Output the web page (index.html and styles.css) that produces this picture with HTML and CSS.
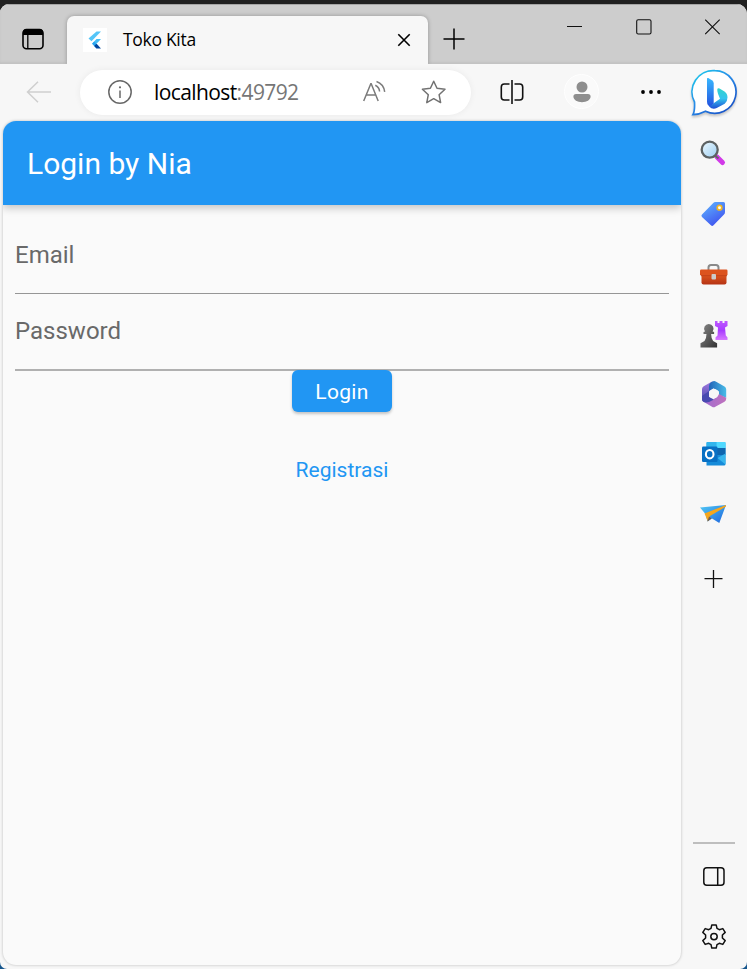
FILE: index.html
```html
<!DOCTYPE html>
<html lang="id">
<head>
<meta charset="utf-8">
<title>Toko Kita</title>
<link rel="stylesheet" href="styles.css">
</head>
<body>
<div class="window">
  <header class="tabstrip">
    <svg class="tab-actions" width="24" height="24" viewBox="0 0 24 24"><rect x="2" y="2.500" width="20" height="19.300" rx="3.500" fill="none" stroke="#000" stroke-width="1.600"/><path d="M2 8V5.500A3.500 3.500 0 0 1 5.500 2h13A3.500 3.500 0 0 1 22 5.500V8z"/><path d="M6.800 7v15" stroke="#000" stroke-width="1.300"/></svg>
    <div class="tab">
      <span class="favicon"><svg width="24" height="24" viewBox="0 0 24 24"><path d="M13.500 3.500H18L8.500 13.300 5.500 10.500z" fill="#54c5f8"/><path d="M13.500 11H18l-4.500 4.800H9z" fill="#45bdf5"/><path d="M9 15.800l2.200-2.300 4.300 4.500-2 2.500z" fill="#29a5ef"/><path d="M11.200 18l2.300-2.200 4.500 4.700h-4.500z" fill="#01459e"/></svg></span>
      <span class="tab-title">Toko Kita</span>
      <svg class="tab-close" width="16" height="16" viewBox="0 0 16 16"><path d="M2.300 2.300l11.400 11.400M13.700 2.300L2.300 13.700" stroke="#000" stroke-width="1.600"/></svg>
    </div>
    <svg class="new-tab" width="24" height="24" viewBox="0 0 24 24"><path d="M1.500 12h21M12 1.500v21" stroke="#000" stroke-width="1.500"/></svg>
    <div class="window-controls">
      <svg width="16" height="16" viewBox="0 0 16 16"><path d="M0 7.500h15" stroke="#111" stroke-width="1"/></svg>
      <svg width="16" height="16" viewBox="0 0 16 16"><rect x=".7" y=".7" width="14.300" height="14.300" rx="1.500" fill="none" stroke="#111" stroke-width="1.100"/></svg>
      <svg width="16" height="16" viewBox="0 0 16 16"><path d="M.2.700l14.500 14.500M14.700.700L.2 15.200" stroke="#111" stroke-width="1.100"/></svg>
    </div>
  </header>

  <nav class="toolbar">
    <svg class="back" width="26" height="24" viewBox="0 0 26 24"><path d="M25 12H1.500M12 1.800L1.500 12 12 22.200" fill="none" stroke="#cfcfcf" stroke-width="1.500"/></svg>
    <div class="address">
      <svg class="info" width="26" height="26" viewBox="0 0 26 26"><circle cx="13" cy="13" r="11.200" fill="none" stroke="#686868" stroke-width="1.500"/><path d="M13 11.500v7.500" stroke="#686868" stroke-width="1.500"/><circle cx="13" cy="8.300" r="1.100" fill="#686868"/></svg>
      <span class="url"><span class="host">localhost</span><span class="port">:49792</span></span>
      <svg class="read" width="26" height="26" viewBox="0 0 26 26" fill="none" stroke="#7b7b7b" stroke-width="1.500"><path d="M1.700 22L8.800 4.800h.4l7 17.200M4.400 16h9.300M13.300 6.300c2.700 1.300 4 3 4.300 6.200M14.500 2.500c4.400 1.500 7.400 4.700 8.200 10.300"/></svg>
      <svg class="star" width="26" height="26" viewBox="0 0 26 26"><path d="M12.700 2.300l3.300 7 8 .9-5.900 5.500 1.500 7.900-6.900-3.900-6.900 3.900 1.500-7.900-5.900-5.500 8-.9z" fill="none" stroke="#727272" stroke-width="1.500" stroke-linejoin="round"/></svg>
    </div>
    <svg class="split" width="26" height="26" viewBox="0 0 26 26" fill="none" stroke="#111" stroke-width="1.600"><path d="M10.500 5H5.300a3 3 0 0 0-3 3v10a3 3 0 0 0 3 3h5.200M15.500 5h5.200a3 3 0 0 1 3 3v10a3 3 0 0 1-3 3h-5.200M13 1v24"/></svg>
    <span class="profile"><svg width="20" height="22" viewBox="0 0 20 22" fill="#8e8e8e"><circle cx="10" cy="6" r="5.500"/><path d="M4 13h12a2.600 2.600 0 0 1 2.600 2.600C18.600 19 14.500 21.300 10 21.300S1.400 19 1.400 15.600A2.600 2.600 0 0 1 4 13z"/></svg></span>
    <svg class="more" width="22" height="6" viewBox="0 0 22 6"><circle cx="3" cy="3" r="1.900"/><circle cx="11" cy="3" r="1.900"/><circle cx="19" cy="3" r="1.900"/></svg>
    <svg class="bing" width="48" height="50" viewBox="0 0 48 50">
      <defs>
        <linearGradient id="ring" x1="0" y1="0" x2=".8" y2="1"><stop stop-color="#19d0eb"/><stop offset=".5" stop-color="#288be8"/><stop offset="1" stop-color="#174ec5"/></linearGradient>
        <linearGradient id="stem" x2="0" y2="1"><stop stop-color="#39b9ff"/><stop offset="1" stop-color="#2353df"/></linearGradient>
        <linearGradient id="bowl" x2="0" y2="1"><stop stop-color="#31d3cd"/><stop offset=".5" stop-color="#34c5ee"/><stop offset="1" stop-color="#1d4cd4"/></linearGradient>
      </defs>
      <path d="M25 2.700a21.300 21.300 0 1 1-9.500 40.500C12 45 8 46.500 2.900 46.700 5 43 4.800 39.500 4.500 34A21.300 21.300 0 0 1 25 2.700z" fill="#fff" stroke="url(#ring)" stroke-width="1.700"/>
      <path d="M19 38.500l11-7.800-2-5q-2-6.500 1.500-5.200l5 3q3 2 3 6t-2.800 6.300l-8 4.200q-4 2-7.700-1.500z" fill="url(#bowl)"/>
      <path d="M17 10.500q0-1 1.300-.4l4 2.400q1.400 1 1.400 3v20L20 38.500q-3-1-3-5z" fill="url(#stem)"/>
    </svg>
  </nav>

  <div class="content">
    <main class="page">
      <h1 class="app-bar">Login by Nia</h1>
      <form class="form">
        <label class="field email">Email</label>
        <label class="field password">Password</label>
        <button class="login" type="button">Login</button>
        <a class="register">Registrasi</a>
      </form>
    </main>

    <aside class="sidebar">
      <svg width="30" height="30" viewBox="0 0 30 30">
        <defs>
          <linearGradient id="lens" x2="1" y2="1"><stop stop-color="#eefaff"/><stop offset="1" stop-color="#9bcdf2"/></linearGradient>
          <linearGradient id="tag" x2=".6" y2="1"><stop stop-color="#60baff"/><stop offset="1" stop-color="#4054ef"/></linearGradient>
          <linearGradient id="case" x2="0" y2="1"><stop stop-color="#e45d21"/><stop offset="1" stop-color="#b53314"/></linearGradient>
          <linearGradient id="pawn" x2="1" y2="1"><stop stop-color="#888"/><stop offset="1" stop-color="#333"/></linearGradient>
          <linearGradient id="rook" x2="0" y2="1"><stop stop-color="#be58ff"/><stop offset=".5" stop-color="#a83cff"/><stop offset="1" stop-color="#d779ff"/></linearGradient>
          <linearGradient id="plane" x2="1" y2="1"><stop stop-color="#51c9f5"/><stop offset="1" stop-color="#1d65dd"/></linearGradient>
          <linearGradient id="hexTop"><stop stop-color="#2264b8"/><stop offset="1" stop-color="#49bce8"/></linearGradient>
          <linearGradient id="hexLeft" x2="0" y2="1"><stop stop-color="#a47ae0"/><stop offset="1" stop-color="#4548ad"/></linearGradient>
          <linearGradient id="hexBottom"><stop stop-color="#a06bd0"/><stop offset="1" stop-color="#bf72bd"/></linearGradient>
        </defs>
        <path d="M18 18l5.500 5.500" stroke="#d13ae8" stroke-width="5" stroke-linecap="round"/><path d="M16.500 17l3 2.500" stroke="#666" stroke-width="2"/><circle cx="10.700" cy="10.700" r="8" fill="url(#lens)" stroke="#5d6263" stroke-width="2.300"/>
      </svg>
      <svg width="30" height="30" viewBox="-1 0 30 30"><path d="M15.500 3h8q1.500 0 1.500 1.500V13q0 1.500-1 2.500L13.500 26.300q-1.300 1.200-2.600 0L2 18q-1.200-1.200 0-2.600L13 4.200Q14 3 15.500 3z" fill="url(#tag)"/><circle cx="19.500" cy="8.700" r="2.300" fill="#fff" stroke="#f1b620" stroke-width="1.700"/></svg>
      <svg width="30" height="30" viewBox="0 -1 30 30"><path d="M9.500 10V7.500q0-2.500 2.500-2.500h5q2.500 0 2.500 2.500V10" fill="none" stroke="#898989" stroke-width="2"/><rect x="2.500" y="13" width="25" height="11.500" rx="2" fill="url(#case)"/><rect x="1" y="9.500" width="27.500" height="6" rx="1.200" fill="#dc531e"/><path d="M2 15.700h26" stroke="#c44319"/><rect x="12.500" y="14" width="4.500" height="5.500" rx="1" fill="#ccc"/></svg>
      <svg width="30" height="30" viewBox="0 0 30 30"><path d="M16 2h2.500v2h2V2h3v2h2V2H28.500v5l-2.500 1.500.8 8L28.500 18.500V21H16.500v-2.500l2-2L19 8.500 16 7z" fill="url(#rook)"/><path d="M9.800 5a4.700 4.700 0 0 1 3.800 7.500l1.500.5v2h-3q0 4 2 7l4 2.200V28.500H1.500v-4.300l4-2.200q2-3 2-7h-3v-2l1.500-.5A4.700 4.700 0 0 1 9.800 5z" fill="url(#pawn)"/></svg>
      <svg width="30" height="30" viewBox="-.5 0 30 30"><path d="M13 2.300L4.200 7.300Q2.500 8.300 2.500 10v10q0 2 1.500 2.800l7.500.2-2-5.500V12.500L14 9z" fill="url(#hexLeft)"/><path d="M11.500 3.200l2.200-1q1.300-.5 2.500.2L25 7.500q1.700 1 1.700 2.700v8.500L19.500 16v-3.500L14 9.200 9.500 12V7q0-2 2-3.800z" fill="url(#hexTop)"/><path d="M3.500 22.500l9 5.200q1.700 1 3.300 0l9.200-5q1.700-1 1.700-3v-1L19.500 15 14 20.500z" fill="url(#hexBottom)"/><path d="M9.500 12v6l5 2.600-5 2.400q-3.500 1-6-.5-1-.8-1-2.500v-3z" fill="#484ab0"/><circle cx="14.500" cy="14.600" r="4.700" fill="#f7f7f7"/></svg>
      <svg width="30" height="30" viewBox="-.5 0 30 30"><path d="M8 3h17q1 0 1 1v12H7V4q0-1 1-1z" fill="#28a8ea"/><path d="M8 3h9v6H7V4q0-1 1-1z" fill="#32b5ed"/><path d="M17 3h8q1 0 1 1v5h-9z" fill="#50d9ff"/><path d="M17 9h9v7h-9z" fill="#0e65af"/><path d="M7 16h19v9q0 1.500-1.500 1.500H7z" fill="#168bd9"/><path d="M18 19l8-4.500v11z" fill="#37b5ed"/><rect x="2.500" y="7.500" width="15.500" height="15.500" rx="1.300" fill="#0870c4"/><ellipse cx="10.200" cy="15.200" rx="3.800" ry="4.200" fill="none" stroke="#fff" stroke-width="2.100"/></svg>
      <svg width="30" height="30" viewBox="0 -1 30 30"><path d="M1 7.500L27 5l-6.700 18L13 18.500 8.500 21.500l-2-7.500z" fill="url(#plane)"/><path d="M5.500 13.500L27 5v1.500L11 16l-2 5.500z" fill="#f5a61c"/><path d="M8.500 21.500L10 16.500l2.500 2z" fill="#705b50"/></svg>
      <svg class="add" width="30" height="30" viewBox="0 0 30 30"><path d="M5.500 14.700h18M14.500 6v18" stroke="#111" stroke-width="1.300"/></svg>
      <div class="sidebar-end">
        <svg width="30" height="30" viewBox="0 0 30 30" fill="none" stroke="#111" stroke-width="1.500"><rect x="4.800" y="5.700" width="20.200" height="17.500" rx="3"/><path d="M18.700 6v17"/></svg>
        <svg width="30" height="30" viewBox="0 .4 30 30" fill="none" stroke="#111" stroke-width="1.500" stroke-linejoin="round"><path d="M12.800 3.300h4.400l.8 3.500 2.300 1.300 3.500-1.100 2.400 3.800-2.800 2.600v3l2.800 2.600-2.400 3.800-3.500-1.100-2.300 1.300-.8 3.500h-4.400l-.8-3.500-2.300-1.300-3.500 1.100L3.800 19l2.800-2.600v-3l-2.800-2.600L6.200 7l3.500 1.100L12 6.800z"/><circle cx="15" cy="15" r="3.200"/></svg>
      </div>
    </aside>
  </div>
</div>
</body>
</html>
```
FILE: styles.css
```css
* { box-sizing: border-box; }
body {
  margin: 0;
  height: 969px;
  padding-top: 4px;
  overflow: hidden;
  background: linear-gradient(#202020 0 50%, #15558c 50%);
  font-family: Roboto, sans-serif;
}
svg { display: block; flex: none; }
.window {
  height: 965px;
  display: flex;
  flex-direction: column;
  background: #f7f7f7;
  border-radius: 9px 10px 7px 7px;
  overflow: hidden;
}
.tabstrip {
  height: 60px;
  flex: none;
  display: flex;
  padding-left: 21px;
  background: #cdcdcd;
  border-top: 1px solid #a5a5a5;
  box-shadow: inset 0 -2px 2px #c2c2c2;
}
.tab-actions { margin-top: 22px; }
.tab {
  width: 361px;
  height: 48px;
  margin: 11px 0 0 22px;
  padding: 0 16px;
  display: flex;
  align-items: center;
  background: #f7f7f7;
  border-radius: 7px 7px 0 0;
  box-shadow: 0 0 4px rgba(0, 0, 0, .28);
}
.favicon { background: #fff; }
.tab-title {
  margin: -2px 0 0 16px;
  font: 17.5px "Open Sans", sans-serif;
  letter-spacing: -.3px;
}
.tab-close { margin-left: auto; }
.new-tab { margin: 22px 0 0 14px; }
.window-controls {
  display: flex;
  gap: 53px;
  margin: 14px 26px 0 auto;
}
.toolbar {
  position: relative;
  height: 57px;
  flex: none;
  display: flex;
  align-items: center;
  padding: 0 0 2px 26px;
  background: #f7f7f7;
}
.address {
  width: 391px;
  height: 45px;
  margin: 1px 0 0 28px;
  padding: 0 24px 0 27px;
  display: flex;
  align-items: center;
  border-radius: 23px;
  background: #fff;
  box-shadow: 0 0 7px rgba(0, 0, 0, .06);
}
.url {
  margin: -1px 0 0 21px;
  font: 21px "Open Sans", sans-serif;
  letter-spacing: -.6px;
  white-space: nowrap;
}
.port { color: #767676; }
.read { margin-left: auto; }
.star { margin-left: 33px; }
.split { margin-left: 28px; }
.profile {
  width: 35px;
  height: 35px;
  margin-left: 39px;
  display: grid;
  place-items: center;
  background: #fafafa;
  border: 1px solid #fff;
  border-radius: 50%;
}
.more { margin-left: 41px; }
.bing {
  margin: 2px 0 0 28px;
  filter: drop-shadow(0 2px 1px rgba(0, 0, 0, .2));
}
.content {
  height: 848px;
  display: flex;
  padding-left: 3px;
}
.page {
  position: relative;
  width: 678px;
  height: 844px;
  background: #fafafa;
  border-radius: 13px;
  overflow: hidden;
  box-shadow: 0 0 3px rgba(0, 0, 0, .25);
}
.app-bar {
  height: 84px;
  margin: 0;
  padding: 1px 24px 0;
  color: #fff;
  background: #2196f3;
  font-size: 30px;
  font-weight: 400;
  line-height: 84px;
  box-shadow: 0 3px 8px rgba(0, 0, 0, .22);
}
.form {
  display: flex;
  flex-direction: column;
  align-items: center;
  padding: 12px 12px 0;
}
.field {
  width: 100%;
  color: #696969;
  font-size: 24px;
  line-height: 28px;
}
.email {
  height: 77px;
  padding-top: 24px;
  border-bottom: 1px solid #969696;
}
.password {
  height: 77px;
  padding-top: 23px;
  border-bottom: 2px solid #b0b0b0;
}
.login {
  width: 100px;
  height: 42px;
  margin-top: -1px;
  padding: 1px 0 0;
  color: #fff;
  background: #2196f3;
  border: 0;
  border-radius: 6px;
  font: 400 21px Roboto, sans-serif;
  letter-spacing: .3px;
  box-shadow: 0 2px 3px rgba(0, 0, 0, .22);
}
.register {
  margin-top: 45px;
  color: #2196f3;
  font-size: 21px;
  line-height: 26px;
}
.sidebar {
  width: 66px;
  display: flex;
  flex-direction: column;
  align-items: center;
  gap: 30px;
  padding-top: 18px;
}
.add { margin-top: 5px; }
.sidebar-end {
  width: 42px;
  margin: auto 0 17px;
  padding-top: 18px;
  display: flex;
  flex-direction: column;
  align-items: center;
  gap: 30px;
  border-top: 2px solid #bebebe;
}
```
